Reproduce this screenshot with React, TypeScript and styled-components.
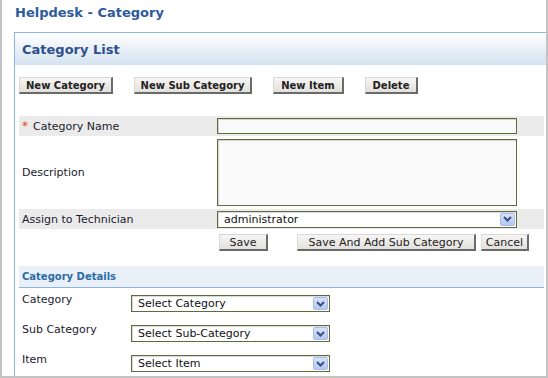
import React from "react";
import styled, { createGlobalStyle } from "styled-components";

const GlobalStyle = createGlobalStyle`
  html, body {
    margin: 0;
    padding: 0;
    background: #ffffff;
  }
  body {
    font-family: Verdana, "DejaVu Sans", sans-serif;
  }
`;

const Frame = styled.div`
  width: 548px;
  height: 378px;
  box-sizing: border-box;
  border-left: 2px solid #c3c3c3;
  border-right: 2px solid #c3c3c3;
  border-bottom: 2px solid #c3c3c3;
  overflow: hidden;
`;

const Title = styled.div`
  height: 32px;
  box-sizing: border-box;
  padding: 5px 0 0 13px;
  font-size: 13px;
  line-height: 16px;
  font-weight: bold;
  color: #2d5a9c;
`;

const Panel = styled.div`
  margin-left: 12px;
  border-left: 1px solid #8cb4e2;
  border-top: 1px solid #8cb4e2;
  height: 346px;
`;

const PanelHeader = styled.div`
  height: 32px;
  display: flex;
  align-items: center;
  padding-left: 7px;
  font-size: 13px;
  font-weight: bold;
  color: #2f4f8c;
  background: linear-gradient(#ffffff, #d4e2ef);
`;

const PanelBody = styled.div`
  padding: 12px 2px 0 4px;
`;

const Toolbar = styled.div`
  display: flex;
  gap: 21px;
  height: 17px;
`;

const Button = styled.button<{ $bold?: boolean; $width: number }>`
  width: ${(p) => p.$width}px;
  height: 17px;
  box-sizing: border-box;
  padding: 0;
  margin: 0;
  font-family: Verdana, "DejaVu Sans", sans-serif;
  font-size: ${(p) => (p.$bold ? "10px" : "11px")};
  line-height: 13px;
  font-weight: ${(p) => (p.$bold ? "bold" : "normal")};
  color: #222222;
  background: linear-gradient(#f7f6f4, #e2e0dc);
  border-top: 1px solid #d8d8d8;
  border-left: 1px solid #d8d8d8;
  border-right: 2px solid #6a6a6a;
  border-bottom: 2px solid #6a6a6a;
  white-space: nowrap;
  cursor: pointer;
`;

const FormTable = styled.div`
  margin-top: 22px;
  display: grid;
  grid-template-columns: 198px 300px 1fr;
`;

const Row = styled.div<{ $shade?: boolean; $height: number }>`
  display: contents;
  & > * {
    background: ${(p) => (p.$shade ? "#ebebeb" : "transparent")};
    height: ${(p) => p.$height}px;
  }
`;

const LabelCell = styled.div`
  display: flex;
  align-items: center;
  padding-left: 3px;
  font-size: 11px;
  color: #221a2e;
`;

const Star = styled.span`
  color: #e0501a;
  margin-right: 5px;
  font-size: 12px;
`;

const FieldCell = styled.div`
  display: flex;
  align-items: center;
`;

const Filler = styled.div``;

const TextInput = styled.input`
  width: 300px;
  height: 16px;
  box-sizing: border-box;
  margin: 0;
  padding: 1px 3px;
  border: 1px solid #5e6b3b;
  background: #fafafa;
  box-shadow: inset 1px 1px 1px #d0d0d0;
  font-family: Verdana, "DejaVu Sans", sans-serif;
  font-size: 11px;
`;

const TextArea = styled.textarea`
  width: 300px;
  height: 67px;
  box-sizing: border-box;
  margin: 0;
  padding: 2px;
  resize: none;
  border: 1px solid #5e6b3b;
  background: #fafafa;
  box-shadow: inset 1px 1px 1px #d0d0d0;
  font-family: Verdana, "DejaVu Sans", sans-serif;
  font-size: 11px;
`;

const SelectBox = styled.div<{ $width: number }>`
  width: ${(p) => p.$width}px;
  height: 17px;
  box-sizing: border-box;
  display: flex;
  align-items: center;
  justify-content: space-between;
  border: 1px solid #5e6b3b;
  background: #ffffff;
  box-shadow: inset 1px 1px 1px #d8d8d8;
  padding: 0 1px 0 6px;
  font-size: 11px;
  color: #111111;
`;

const ArrowBox = styled.span`
  width: 15px;
  height: 13px;
  display: flex;
  align-items: center;
  justify-content: center;
  border-radius: 2px;
  background: linear-gradient(#d6e2fb, #b4c8f2);
  border: 1px solid #a8bce6;
  box-sizing: border-box;
`;

const ActionRow = styled.div`
  grid-column: 2 / 4;
  display: flex;
  align-items: flex-start;
  padding: 5px 0 0 2px;
  height: 28px;
  box-sizing: border-box;
`;

const ActionGroup = styled.div`
  margin-left: 29px;
  display: flex;
  gap: 5px;
`;

const SectionHeader = styled.div`
  margin-top: 9px;
  height: 21px;
  display: flex;
  align-items: center;
  padding-left: 3px;
  font-size: 10px;
  font-weight: bold;
  color: #2b6ca6;
  background: #e9f0f8;
  border-bottom: 1px solid #8cb4e2;
`;

const DetailRow = styled.div`
  display: flex;
  height: 30px;
  align-items: flex-start;
  padding-top: 7px;
  box-sizing: border-box;
`;

const DetailLabel = styled.div`
  width: 109px;
  padding-left: 3px;
  font-size: 11px;
  line-height: 13px;
  margin-top: -2px;
  color: #221a2e;
`;

const Chevron = () => (
  <svg width="9" height="6" viewBox="0 0 9 6">
    <path d="M1 1 L4.5 4.5 L8 1" fill="none" stroke="#3b4f7e" strokeWidth="2" />
  </svg>
);

const Select = ({ value, width }: { value: string; width: number }) => (
  <SelectBox $width={width}>
    <span>{value}</span>
    <ArrowBox>
      <Chevron />
    </ArrowBox>
  </SelectBox>
);

const tools = [
  { label: "New Category", width: 94 },
  { label: "New Sub Category", width: 118 },
  { label: "New Item", width: 71 },
  { label: "Delete", width: 53 },
];

const details = [
  { label: "Category", value: "Select Category" },
  { label: "Sub Category", value: "Select Sub-Category" },
  { label: "Item", value: "Select Item" },
];

export default function App() {
  return (
    <Frame>
      <GlobalStyle />
      <Title>Helpdesk - Category</Title>
      <Panel>
        <PanelHeader>Category List</PanelHeader>
        <PanelBody>
          <Toolbar>
            {tools.map((t) => (
              <Button key={t.label} $bold $width={t.width}>
                {t.label}
              </Button>
            ))}
          </Toolbar>
          <FormTable>
            <Row $shade $height={20}>
              <LabelCell>
                <Star>*</Star>Category Name
              </LabelCell>
              <FieldCell>
                <TextInput />
              </FieldCell>
              <Filler />
            </Row>
            <Row $height={73}>
              <LabelCell>Description</LabelCell>
              <FieldCell>
                <TextArea />
              </FieldCell>
              <Filler />
            </Row>
            <Row $shade $height={20}>
              <LabelCell>Assign to Technician</LabelCell>
              <FieldCell>
                <Select value="administrator" width={300} />
              </FieldCell>
              <Filler />
            </Row>
            <ActionRow>
              <Button $width={49}>Save</Button>
              <ActionGroup>
                <Button $width={179}>Save And Add Sub Category</Button>
                <Button $width={48}>Cancel</Button>
              </ActionGroup>
            </ActionRow>
          </FormTable>
          <SectionHeader>Category Details</SectionHeader>
          {details.map((d) => (
            <DetailRow key={d.label}>
              <DetailLabel>{d.label}</DetailLabel>
              <Select value={d.value} width={199} />
            </DetailRow>
          ))}
        </PanelBody>
      </Panel>
    </Frame>
  );
}
